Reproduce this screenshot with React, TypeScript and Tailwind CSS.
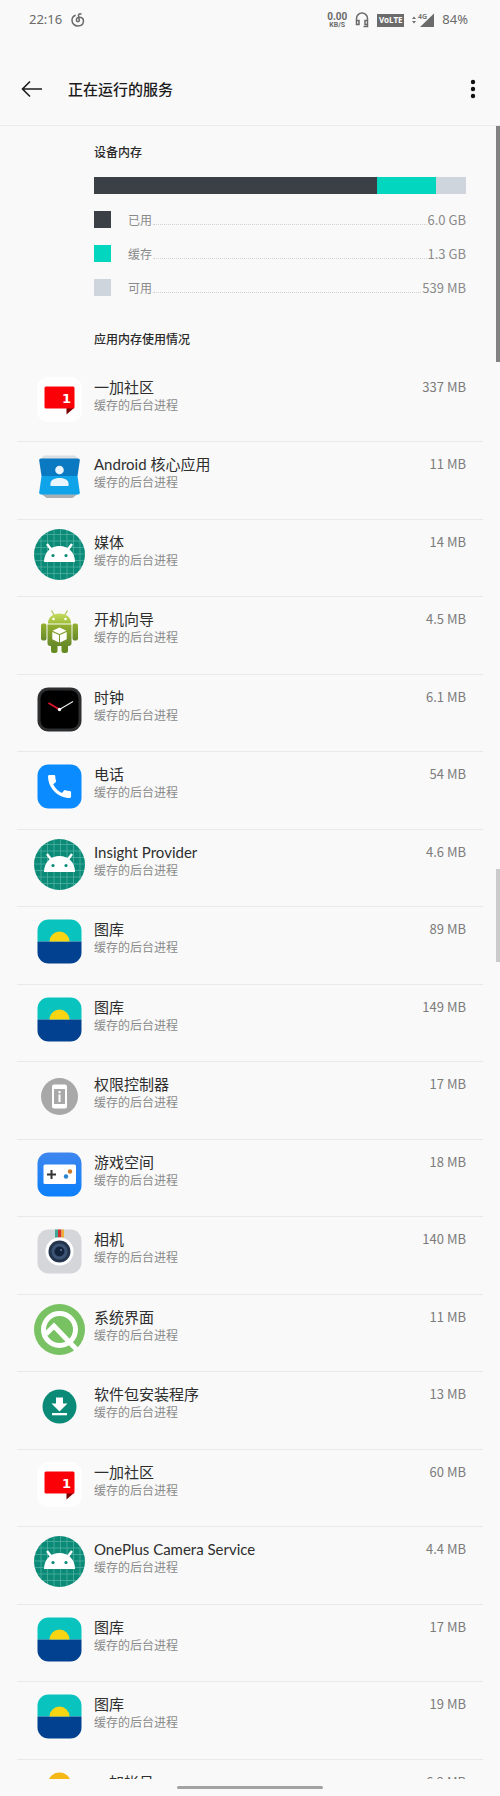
import React from 'react';

function CommunityIcon() {
  return (
    <svg viewBox="0 0 51 51" className="size-[51px]" aria-hidden="true">
      <rect x="3" y="3" width="45" height="45" rx="11" fill="#fefefe" />
      <path d="M32.5 34H40l-7.500 6.500z" fill="#7a0000" />
      <rect x="10.5" y="12.5" width="30" height="22" rx="1.5" fill="#fb0007" />
      <text x="28" y="29" fontSize="13" fontWeight="700" fill="#fff" className="font-['DejaVu_Sans',sans-serif]">1</text>
    </svg>
  );
}

function ContactsIcon() {
  return (
    <svg viewBox="0 0 51 51" className="size-[51px]" aria-hidden="true">
      <path d="M10 4.500h31l3.500 4H6.500z" fill="#d9dfe3" />
      <path d="M7.500 43h36l-5 4h-26z" fill="#a9b0b5" />
      <path d="M7 7.500h37q2 0 1.800 2L43.500 25h-36L5.200 9.500q-.2-2 1.800-2z" fill="#0b78c2" />
      <path d="M7.500 25h36l2.300 16.500q.2 2-1.800 2H7q-2 0-1.800-2z" fill="#0fa3e9" />
      <circle cx="25.500" cy="19" r="4.300" fill="#e9f4fc" />
      <path d="M16.500 35v-2.500c0-4 5-5.500 9-5.500s9 1.500 9 5.500V35z" fill="#e9f4fc" />
    </svg>
  );
}

function AndroidHeadIcon() {
  return (
    <svg viewBox="0 0 51 51" className="size-[51px]" aria-hidden="true">
      <circle cx="25.5" cy="25.5" r="25.5" fill="#0a8a77" />
      <path
        d="M7 8v35M13.500 3v45M20 1v49M26.500 0v51M33 1v49M39.500 4v43M46 10v31M10 5.500h31M4 12h43M1 18.500h49M0 25h51M0 31.500h50M3 38h45M8 44.500h35"
        stroke="#7fc9bd"
        strokeWidth="0.8"
        opacity="0.6"
      />
      <path d="M13 15l4.500 6M38 15l-4.500 6" stroke="#fff" strokeWidth="2.4" />
      <path d="M10 33c0-9.500 6.500-16 15.500-16S41 23.500 41 33z" fill="#fff" />
      <circle cx="19" cy="26.5" r="1.6" fill="#0a8a77" />
      <circle cx="32" cy="26.5" r="1.6" fill="#0a8a77" />
    </svg>
  );
}

function AndroidRobotIcon() {
  return (
    <svg viewBox="0 0 51 51" className="size-[51px]" aria-hidden="true">
      <defs>
        <linearGradient id="robotBody" x1="0" y1="0" x2="0" y2="1">
          <stop offset="0" stopColor="#93b02f" />
          <stop offset="1" stopColor="#67892a" />
        </linearGradient>
        <linearGradient id="robotHead" x1="0" y1="0" x2="0" y2="1">
          <stop offset="0" stopColor="#c5dc62" />
          <stop offset="1" stopColor="#9fbd38" />
        </linearGradient>
      </defs>
      <path d="M17.500 4.500l3 5M33.500 4.500l-3 5" stroke="#a9c24f" strokeWidth="1.2" />
      <path d="M14 17.500C14 11 19 7.500 25.500 7.500S37 11 37 17.500z" fill="url(#robotHead)" />
      <circle cx="19.5" cy="13" r="1.3" fill="#fff" />
      <circle cx="31.5" cy="13" r="1.3" fill="#fff" />
      <rect x="7" y="17.5" width="5.5" height="17" rx="2" fill="url(#robotBody)" />
      <rect x="38.5" y="17.5" width="5.5" height="17" rx="2" fill="url(#robotBody)" />
      <rect x="17" y="35" width="6.5" height="12" rx="2.5" fill="#668b20" />
      <rect x="27.5" y="35" width="6.5" height="12" rx="2.5" fill="#668b20" />
      <path d="M13.500 18.500h24V37q0 3-3 3h-18q-3 0-3-3z" fill="url(#robotBody)" />
      <path d="M25.500 21.500l7 3.300-7 3.300-7-3.300zM18.300 26l6.700 3v7.500l-6.700-3.300zM32.700 26L26 29v7.500l6.700-3.300z" fill="#fff" />
    </svg>
  );
}

function ClockIcon() {
  return (
    <svg viewBox="0 0 51 51" className="size-[51px]" aria-hidden="true">
      <rect x="3.5" y="3.5" width="44" height="44" rx="11" fill="#2d2e30" />
      <rect x="6.5" y="6.5" width="38" height="38" rx="8" fill="#000" />
      <path d="M25.500 25.500l-11-6.500" stroke="#d9152b" strokeWidth="2" />
      <path d="M25.500 25.500l13.500-8" stroke="#e8e8e8" strokeWidth="1.2" />
      <circle cx="25.5" cy="25.5" r="1.7" fill="#fff" />
    </svg>
  );
}

function PhoneIcon() {
  return (
    <svg viewBox="0 0 51 51" className="size-[51px]" aria-hidden="true">
      <rect x="3.5" y="3.5" width="44" height="44" rx="11" fill="#0a8bff" />
      <path
        transform="translate(10.200 10.200) scale(1.280)"
        d="M20.010 15.380c-1.230 0-2.420-.2-3.530-.56a.977.977 0 0 0-1.010.24l-1.570 1.970c-2.830-1.350-5.480-3.900-6.890-6.830l1.950-1.660c.27-.28.35-.67.24-1.020-.37-1.110-.56-2.300-.56-3.530 0-.54-.45-.99-.99-.99H4.190C3.650 3 3 3.240 3 3.990 3 13.280 10.730 21 20.010 21c.71 0 .99-.63.99-1.180v-3.450c0-.54-.45-.99-.99-.99z"
        fill="#fff"
      />
    </svg>
  );
}

function GalleryIcon() {
  return (
    <svg viewBox="0 0 51 51" className="size-[51px]" aria-hidden="true">
      <path d="M3.500 25.500v-11a11 11 0 0 1 11-11h22a11 11 0 0 1 11 11v11z" fill="#09c3be" />
      <path d="M3.500 25.500v11a11 11 0 0 0 11 11h22a11 11 0 0 0 11-11v-11z" fill="#02418f" />
      <path d="M15.500 25.500a10 10 0 0 1 20 0z" fill="#f8d512" />
    </svg>
  );
}

function PermissionIcon() {
  return (
    <svg viewBox="0 0 51 51" className="size-[51px]" aria-hidden="true">
      <circle cx="25.5" cy="25.5" r="18.5" fill="#a8a8a8" />
      <rect x="18" y="13.5" width="15" height="24" rx="2" fill="#fff" />
      <rect x="20" y="18" width="11" height="15" fill="#a8a8a8" />
      <path d="M24.500 20h2v2.200h-2zM24.500 23.500h2V31h-2z" fill="#fff" />
    </svg>
  );
}

function GameIcon() {
  return (
    <svg viewBox="0 0 51 51" className="size-[51px]" aria-hidden="true">
      <defs>
        <linearGradient id="gameBg" x1="0" y1="0" x2="0" y2="1">
          <stop offset="0" stopColor="#3f86ee" />
          <stop offset="1" stopColor="#0a80fb" />
        </linearGradient>
      </defs>
      <rect x="3.5" y="3.5" width="44" height="44" rx="11" fill="url(#gameBg)" />
      <rect x="9.5" y="15.5" width="32.5" height="19.5" rx="1.5" fill="#fff" />
      <path d="M17.500 21v9M13 25.500h9" stroke="#333" strokeWidth="2" />
      <circle cx="36" cy="22.5" r="2.2" fill="#cc7a28" />
      <circle cx="32" cy="27.5" r="2.2" fill="#2b84d0" />
    </svg>
  );
}

function CameraIcon() {
  return (
    <svg viewBox="0 0 51 51" className="size-[51px]" aria-hidden="true">
      <rect x="3.5" y="3.5" width="44" height="44" rx="11" fill="#d5d6da" />
      <path d="M21 3.500h3v8h-3z" fill="#3fa796" />
      <path d="M24 3.500h3.500v8H24z" fill="#d5322c" />
      <path d="M27.500 3.500H30v8h-2.500z" fill="#efb03a" />
      <circle cx="25.5" cy="25.5" r="14" fill="#fff" />
      <circle cx="25.5" cy="25.5" r="11" fill="#24344d" />
      <circle cx="25.5" cy="25.5" r="8" fill="#3c5473" />
      <circle cx="25.5" cy="25.5" r="5" fill="#12233c" />
      <circle cx="27" cy="24" r="1" fill="#5c7ba0" />
    </svg>
  );
}

function SystemIcon() {
  return (
    <svg viewBox="0 0 51 51" className="size-[51px]" aria-hidden="true">
      <circle cx="25.5" cy="25.5" r="25.5" fill="#78c263" />
      <circle cx="25.5" cy="25.5" r="16" fill="none" stroke="#fff" strokeWidth="5" />
      <path d="M12 30l8-8L42.500 45.500" fill="none" stroke="#fff" strokeWidth="5" />
    </svg>
  );
}

function InstallerIcon() {
  return (
    <svg viewBox="0 0 51 51" className="size-[51px]" aria-hidden="true">
      <circle cx="25.5" cy="25.5" r="17" fill="#0a8a77" />
      <path d="M22 16.500h7v6h4.500l-8 8-8-8H22z" fill="#fff" />
      <path d="M18 32h15v2.300H18z" fill="#fff" />
    </svg>
  );
}

function AccountIcon() {
  return (
    <svg viewBox="0 0 51 51" className="size-[51px]" aria-hidden="true">
      <circle cx="25.5" cy="15" r="11.5" fill="#f6b816" />
      <path d="M8 48c0-12 8-19 17.500-19S43 36 43 48z" fill="#f6b816" />
    </svg>
  );
}

const memory = [
  { label: '已用', value: '6.0 GB', color: 'bg-[#3b4047]', share: 76 },
  { label: '缓存', value: '1.3 GB', color: 'bg-[#03d6be]', share: 16 },
  { label: '可用', value: '539 MB', color: 'bg-[#ced5dc]', share: 8 },
];

const processes = [
  { name: '一加社区', size: '337 MB', Icon: CommunityIcon },
  { name: 'Android 核心应用', size: '11 MB', Icon: ContactsIcon },
  { name: '媒体', size: '14 MB', Icon: AndroidHeadIcon },
  { name: '开机向导', size: '4.5 MB', Icon: AndroidRobotIcon },
  { name: '时钟', size: '6.1 MB', Icon: ClockIcon },
  { name: '电话', size: '54 MB', Icon: PhoneIcon },
  { name: 'Insight Provider', size: '4.6 MB', Icon: AndroidHeadIcon },
  { name: '图库', size: '89 MB', Icon: GalleryIcon },
  { name: '图库', size: '149 MB', Icon: GalleryIcon },
  { name: '权限控制器', size: '17 MB', Icon: PermissionIcon },
  { name: '游戏空间', size: '18 MB', Icon: GameIcon },
  { name: '相机', size: '140 MB', Icon: CameraIcon },
  { name: '系统界面', size: '11 MB', Icon: SystemIcon },
  { name: '软件包安装程序', size: '13 MB', Icon: InstallerIcon },
  { name: '一加社区', size: '60 MB', Icon: CommunityIcon },
  { name: 'OnePlus Camera Service', size: '4.4 MB', Icon: AndroidHeadIcon },
  { name: '图库', size: '17 MB', Icon: GalleryIcon },
  { name: '图库', size: '19 MB', Icon: GalleryIcon },
  { name: '一加帐号', size: '6.2 MB', Icon: AccountIcon },
];

function StatusBar() {
  return (
    <div className="flex h-10 shrink-0 items-center justify-between pl-[29px] pr-8 text-[#6b6b6b]">
      <div className="flex items-center gap-[9px]">
        <span className="text-[13px] font-['Noto_Sans',sans-serif]">22:16</span>
        <svg viewBox="0 0 14 14" className="size-[14px]" fill="none" stroke="currentColor" strokeWidth="1.5" aria-hidden="true">
          <path d="M10.500 1.300C9 .3 7.300 1 7.500 2.600l.8 4.600c.2 1.500-2.600 2-2.800.1C5.200 5.300 7 4 8.800 4.200c2.200.2 3.800 2 3.600 4.300-.2 2.600-2.400 4.500-5.400 4.500-3.400 0-6-2.500-6-5.800C1 4.800 2.500 2.900 4.700 2.200" />
        </svg>
      </div>
      <div className="flex items-center gap-2">
        <div className="flex flex-col items-center font-['Roboto',sans-serif] font-bold">
          <span className="text-[10px] leading-[9px]">0.00</span>
          <span className="text-[7px] leading-[8px]">KB/S</span>
        </div>
        <svg viewBox="0 0 14 16" className="h-4 w-[14px]" fill="none" stroke="currentColor" strokeWidth="1.5" aria-hidden="true">
          <path d="M1.500 12V6.500a5.500 5.500 0 0 1 11 0v8h-4M1.500 8.500H4v4H1.500zM12.500 8.500H10v4h2.500" />
        </svg>
        <span className="flex h-[13px] w-[27px] items-center justify-center bg-[#6b6b6b] text-[8px] font-bold text-white font-['Noto_Sans',sans-serif]">
          VoLTE
        </span>
        <svg viewBox="0 0 22 16" className="h-4 w-[22px]" fill="currentColor" aria-hidden="true">
          <path d="M0 7L2 4.500 4 7zM0 9l2 2.500L4 9zM22 1.500V15H8z" />
          <text x="6" y="7" fontSize="7" fontWeight="600" className="font-['Noto_Sans',sans-serif]">4G</text>
        </svg>
        <span className="text-[13px] font-['Noto_Sans',sans-serif]">84%</span>
      </div>
    </div>
  );
}

function TopBar() {
  return (
    <header className="flex h-[86px] shrink-0 items-center border-b border-[#ececec] px-[21px] pt-3">
      <button type="button" aria-label="返回" className="mr-[25px]">
        <svg viewBox="0 0 22 18" className="block h-[18px] w-[22px]" fill="none" stroke="#1c1c1c" strokeWidth="1.6" aria-hidden="true">
          <path d="M21 9H2M9 1.500L1.500 9 9 16.500" />
        </svg>
      </button>
      <h1 className="flex-1 text-[15px] font-medium leading-5 text-[#1c1c1c]">正在运行的服务</h1>
      <button type="button" aria-label="更多选项">
        <svg viewBox="0 0 12 20" className="block h-5 w-3" fill="#111" aria-hidden="true">
          <circle cx="6" cy="3" r="2.2" />
          <circle cx="6" cy="10" r="2.2" />
          <circle cx="6" cy="17" r="2.2" />
        </svg>
      </button>
    </header>
  );
}

function MemorySummary() {
  return (
    <section className="pl-[94px] pr-[34px] pt-4">
      <h2 className="text-xs font-medium leading-5 text-[#2a2a2a]">设备内存</h2>
      <div className="mt-[15px] flex h-[17px]">
        {memory.map((m) => (
          <div key={m.label} className={m.color} style={{ width: `${m.share}%` }} />
        ))}
      </div>
      <ul className="mt-[17px] flex flex-col gap-[17px]">
        {memory.map((m) => (
          <li key={m.label} className="flex h-[17px] items-center text-xs text-[#8a8a8a]">
            <span className={`size-[17px] ${m.color}`} />
            <span className="ml-[17px]">{m.label}</span>
            <span className="mx-px h-[10px] flex-1 border-b border-dotted border-[#d2d2d2]" />
            <span className="text-[13px]">{m.value}</span>
          </li>
        ))}
      </ul>
    </section>
  );
}

export default function App() {
  return (
    <div className="relative flex h-screen flex-col overflow-hidden bg-[#f9f9f9] font-['Noto_Sans_CJK_SC',sans-serif]">
      <StatusBar />
      <TopBar />
      <main className="min-h-0 flex-1 overflow-hidden">
        <MemorySummary />
        <h2 className="mb-4 ml-[94px] mt-[33px] text-xs font-medium leading-5 text-[#2a2a2a]">应用内存使用情况</h2>
        <ul className="mx-[17px] grid auto-rows-[77px_78px]">
          {processes.map(({ name, size, Icon }, i) => (
            <li key={i} className="flex items-start border-b border-[#e9e9e9] px-[17px] pt-[9px]">
              <Icon />
              <div className="ml-[9px] flex-1 pt-1">
                <p className="text-[15px] leading-[18px] text-[#2e2e2e] font-['Lato','Noto_Sans_CJK_SC',sans-serif]">{name}</p>
                <p className="text-xs leading-[18px] text-[#8a8a8a]">缓存的后台进程</p>
              </div>
              <span className="pt-1 text-[13px] leading-[18px] text-[#7c7c7c]">{size}</span>
            </li>
          ))}
        </ul>
      </main>
      <footer className="flex h-[17px] shrink-0 justify-center pt-[7px]">
        <span className="h-[3px] w-[146px] rounded-full bg-[#a3a3a3]" />
      </footer>
      {/* scroll thumbs */}
      <span className="absolute right-0 top-[126px] h-[236px] w-1 bg-[#828282]" />
      <span className="absolute right-0 top-[869px] h-[93px] w-1 bg-[#cbcbcb]" />
    </div>
  );
}
